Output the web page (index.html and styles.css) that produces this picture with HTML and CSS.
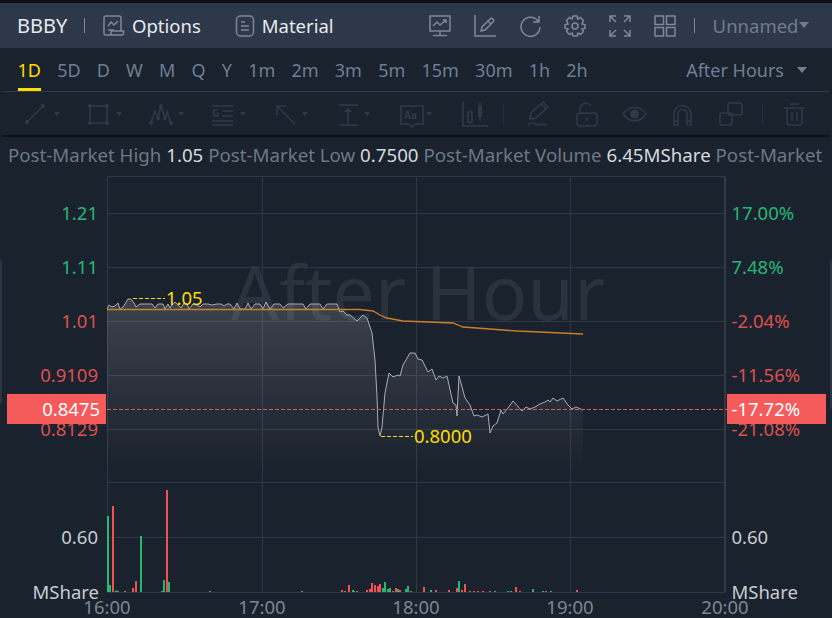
FILE: index.html
```html
<!DOCTYPE html>
<html>
<head>
  <title>BBBY</title>
  <link rel="stylesheet" href="styles.css">
</head>
<body>
  <div class="topbar">
    <span class="symbol">BBBY</span>
    <span class="top-sep"></span>
    <a class="top-link link-options">
      <svg class="top-icon" viewBox="0 0 22 22"><path d="M18 16V3a2 2 0 0 0-2-2H3a2 2 0 0 0-2 2v15a2 2 0 0 0 2 2h15.500a2 2 0 0 0 2-2v-2H8v2a2 2 0 0 1-2 2"/><path d="M5 11l3-4 3 3 4-4M5 15h6"/></svg>
      Options
    </a>
    <a class="top-link link-material">
      <svg class="top-icon" viewBox="0 0 20 22"><rect x="1.500" y="1" width="17" height="20" rx="4"/><path d="M6 7h4M6 11h8M6 15h8"/></svg>
      Material
    </a>
    <div class="top-actions">
      <svg class="top-icon" viewBox="0 0 22 22"><rect x="1" y="1" width="20" height="15"/><path d="M4 11l4-4 3 3 6-5M14 5h3v3M11 16v4M4 20.500h14"/></svg>
      <svg class="top-icon" viewBox="0 0 22 22"><path d="M1 0v21h21M7 16l1-4 8-8a1.500 1.500 0 0 1 3 3l-8 8zM14 6l3 3"/></svg>
      <svg class="top-icon" viewBox="0 0 22 22"><path d="M19 6a9.500 9.500 0 1 0 2 6M20 1v6h-6"/></svg>
      <svg class="top-icon" viewBox="0 0 22 22"><path d="M9 1h4l.7 3 2.600-1.500 3 3L18 9l3 .8v3.400L18 14l1.500 2.500-3 3L14 18l-1 3H9l-.8-3-2.700 1.500-3-3L4 14l-3-.8V9.800L4 9 2.500 5.500l3-3L8.200 4z"/><circle cx="11" cy="11" r="3"/></svg>
      <svg class="top-icon" viewBox="0 0 22 22"><path d="M1 7V1h6M1 1l6 6M15 1h6v6M21 1l-6 6M1 15v6h6M1 21l6-6M15 21h6v-6M21 21l-6-6"/></svg>
      <svg class="top-icon" viewBox="0 0 22 22"><rect x="1" y="1" width="8.500" height="8.500"/><rect x="12.500" y="1" width="8.500" height="8.500"/><rect x="1" y="12.500" width="8.500" height="8.500"/><rect x="12.500" y="12.500" width="8.500" height="8.500"/></svg>
    </div>
    <span class="top-sep sep-right"></span>
    <span class="layout-name">Unnamed<i class="caret caret-layout"></i></span>
  </div>

  <div class="periods">
    <span class="period active">1D</span>
    <span class="period">5D</span>
    <span class="period">D</span>
    <span class="period">W</span>
    <span class="period">M</span>
    <span class="period">Q</span>
    <span class="period">Y</span>
    <span class="period">1m</span>
    <span class="period">2m</span>
    <span class="period">3m</span>
    <span class="period">5m</span>
    <span class="period">15m</span>
    <span class="period">30m</span>
    <span class="period">1h</span>
    <span class="period">2h</span>
    <span class="session">After Hours<i class="caret caret-session"></i></span>
  </div>

  <div class="tools">
    <div class="tool"><svg viewBox="0 0 24 24"><path d="M3 20L19 4"/><circle class="dot" cx="3" cy="20" r="2"/><circle class="dot" cx="19" cy="4" r="2"/></svg><i class="caret"></i></div>
    <div class="tool"><svg viewBox="0 0 24 24"><rect x="4" y="4" width="17" height="17"/><circle class="dot" cx="4" cy="4" r="2"/><circle class="dot" cx="21" cy="4" r="2"/><circle class="dot" cx="4" cy="21" r="2"/><circle class="dot" cx="21" cy="21" r="2"/></svg><i class="caret"></i></div>
    <div class="tool"><svg viewBox="0 0 24 24"><path d="M3 21l4-12 3 7 3-12 4 12 2-6 4 11"/><circle class="dot" cx="3" cy="21" r="2"/><circle class="dot" cx="13" cy="4" r="2"/><circle class="dot" cx="10" cy="16" r="2"/><circle class="dot" cx="17" cy="16" r="2"/><circle class="dot" cx="23" cy="21" r="2"/></svg><i class="caret"></i></div>
    <div class="tool"><svg viewBox="0 0 24 24"><path d="M2 4h21M12 9h11M12 14h11M2 19h21M2 23h21"/><text class="tool-letter" x="2" y="15">G</text></svg><i class="caret"></i></div>
    <div class="tool"><svg viewBox="0 0 24 24"><path d="M5 4l18 18M5 4h9M5 4v9"/></svg><i class="caret"></i></div>
    <div class="tool"><svg viewBox="0 0 24 24"><path d="M5 3h19M5 23h19M14 8v15"/><path class="dot" d="M10 10l4-4 4 4z"/></svg><i class="caret"></i></div>
    <div class="tool"><svg viewBox="0 0 24 24"><path d="M5 4h22v18H19l-3 3-3-3H5z"/><text class="tool-letter" x="8" y="17">Aa</text></svg><i class="caret"></i></div>
    <div class="tool tool-wide"><svg class="svg-wide" viewBox="0 0 24 24"><path d="M5 0v24h25M12 8v2M12 20v2M22 1v3M22 15v4"/><rect x="10" y="10" width="4" height="10"/><rect class="dot" x="20" y="4" width="4" height="11"/></svg><span class="tool-sep"></span></div>
    <div class="tool tool-plain"><svg viewBox="0 0 24 24"><path d="M2 23c5-5 7 0 10 0s5-2 9 0M4 17l1-6L17 0l5 5L10 16zM15 2l5 5"/></svg></div>
    <div class="tool tool-plain"><svg viewBox="0 0 24 24"><rect x="3" y="11" width="20" height="13" rx="3"/><path d="M6 11V7a6 6 0 0 1 11-3M13 15v4"/></svg></div>
    <div class="tool tool-plain"><svg viewBox="0 0 24 24"><path d="M1 12c6-9 17-9 23 0-6 9-17 9-23 0z"/><circle class="dot" cx="12.500" cy="12" r="4.500"/></svg></div>
    <div class="tool tool-plain"><svg viewBox="0 0 24 24"><path d="M4 23V12a8.500 8.500 0 0 1 17 0v11h-4V12a4.500 4.500 0 0 0-9 0v11zM4 19h4M17 19h4"/></svg></div>
    <div class="tool tool-last"><svg viewBox="0 0 24 24"><rect x="10" y="1" width="14" height="12" rx="2"/><rect x="2" y="11" width="12" height="12" rx="2"/></svg><span class="tool-sep"></span></div>
    <div class="tool tool-plain"><svg viewBox="0 0 24 24"><path d="M2 6h21M8 2h9M5 6v14a3 3 0 0 0 3 3h9a3 3 0 0 0 3-3V6M10 10v9M15 10v9"/></svg></div>
  </div>

  <div class="quote">
    <span class="q-label">Post-Market High</span> <span class="q-value">1.05</span>
    <span class="q-label">Post-Market Low</span> <span class="q-value">0.7500</span>
    <span class="q-label">Post-Market Volume</span> <span class="q-value">6.45MShare</span>
    <span class="q-label">Post-Market</span>
  </div>

  <svg class="chart" viewBox="0 175 832 443">
    <defs>
      <linearGradient id="priceFill" gradientUnits="userSpaceOnUse" x1="0" y1="305" x2="0" y2="470">
        <stop offset="0" stop-color="#fff" stop-opacity="0.14"/>
        <stop offset="1" stop-color="#fff" stop-opacity="0"/>
      </linearGradient>
    </defs>

    <text class="watermark" x="418" y="320">After Hour</text>

    <path class="grid" d="M107 176.500H725M107 213.500H725M107 267.500H725M107 321.500H725M107 375.500H725M107 429.500H725M107 482.500H725M107 537.500H725M107 592.500H725"/>
    <path class="grid" d="M107.500 176V592M262.500 176V592M416.500 176V592M570.500 176V592"/>
    <path class="axis" d="M725 176V592"/>

    <path class="price-fill" d="M107 309L109 305 112 307 115 306 118 303 120 309 123 307 125 304 128 299 131 299 134 303 136 307 140 304 146 304 152 304 155 308 158 304 163 304 165 309 168 304 170 308 172 305 175 302 178 305 181 308 184 303 187 304 189 309 193 304 197 305 200 307 203 304 208 304 212 305 217 304 221 304 224 306 227 304 230 304 234 309 237 303 240 309 245 309 248 303 251 309 255 304 260 304 263 309 266 302 270 309 274 304 280 304 283 308 288 304 297 304 303 304 306 309 310 304 320 304 323 309 327 304 332 304 337 304 340 312 343 311 347 315 350 315 357 321 363 315 367 318 372 333 375 360 377 397 378 427 380 436 382 427 385 393 389 373 393 377 398 375 400 376 403 365 410 353 415 353 418 359 422 360 428 372 432 369 436 380 439 376 443 378 447 376 453 403 456 405 457 416 459 376 465 398 470 405 474 416 477 415 482 417 488 414 490 433 493 426 497 423 501 410 503 414 508 408 513 401 522 411 526 407 530 409 535 407 540 404 545 402 548 400 550 402 553 398 557 401 563 398 568 405 572 409 576 407 583 410V480H107Z"/>
    <path class="price-line" d="M107 309L109 305 112 307 115 306 118 303 120 309 123 307 125 304 128 299 131 299 134 303 136 307 140 304 146 304 152 304 155 308 158 304 163 304 165 309 168 304 170 308 172 305 175 302 178 305 181 308 184 303 187 304 189 309 193 304 197 305 200 307 203 304 208 304 212 305 217 304 221 304 224 306 227 304 230 304 234 309 237 303 240 309 245 309 248 303 251 309 255 304 260 304 263 309 266 302 270 309 274 304 280 304 283 308 288 304 297 304 303 304 306 309 310 304 320 304 323 309 327 304 332 304 337 304 340 312 343 311 347 315 350 315 357 321 363 315 367 318 372 333 375 360 377 397 378 427 380 436 382 427 385 393 389 373 393 377 398 375 400 376 403 365 410 353 415 353 418 359 422 360 428 372 432 369 436 380 439 376 443 378 447 376 453 403 456 405 457 416 459 376 465 398 470 405 474 416 477 415 482 417 488 414 490 433 493 426 497 423 501 410 503 414 508 408 513 401 522 411 526 407 530 409 535 407 540 404 545 402 548 400 550 402 553 398 557 401 563 398 568 405 572 409 576 407 583 410"/>
    <path class="avg-line" d="M107 309.500H360L373 311 380 315 387 318 403 321 453 323 463 327 517 331 583 334"/>

    <path class="mark-dash" d="M133 298.500H165M381 436.500H413"/>
    <text class="mark" x="166" y="304.500">1.05</text>
    <text class="mark" x="414" y="443">0.8000</text>

    <path class="vol-up" d="M108 592V516M110 592V585M116 592V590.500M118 592V591M141 592V536M162 592V591M164 592V580M169 592V582M210 592V591M302 592V591M353 592V590M354 592V591M383 592V588M385 592V582M388 592V589M390 592V588M398 592V589M406 592V589M408 592V586M431 592V590M459 592V581M490 592V591M495 592V591M508 592V591M511 592V591M533 592V589M543 592V591M551 592V591"/>
    <path class="vol-down" d="M113 592V506M133 592V588M136 592V581M167 592V490M125 592V591M342 592V590M349 592V585M345 592V591M357 592V591M367 592V590M370 592V589M372 592V583M375 592V585M378 592V586M380 592V584M393 592V591M396 592V588M400 592V590M411 592V591M424 592V587M436 592V590M449 592V590M457 592V588M462 592V590M465 592V584M470 592V591M474 592V591M478 592V591M483 592V591M490 592V591M516 592V587M520 592V591M546 592V591M577 592V590"/>

    <g class="axis-left">
      <text class="up" x="98" y="219.500">1.21</text>
      <text class="up" x="98" y="273.500">1.11</text>
      <text class="down" x="98" y="327.500">1.01</text>
      <text class="down" x="98" y="381.500">0.9109</text>
      <text class="down" x="98" y="435.500">0.8129</text>
      <text class="plain" x="98" y="543.500">0.60</text>
      <text class="plain" x="99" y="599">MShare</text>
    </g>
    <g class="axis-right">
      <text class="up" x="731.500" y="219.500">17.00%</text>
      <text class="up" x="731.500" y="273.500">7.48%</text>
      <text class="down" x="731.500" y="327.500">-2.04%</text>
      <text class="down" x="731.500" y="381.500">-11.56%</text>
      <text class="down" x="731.500" y="435.500">-21.08%</text>
      <text class="plain" x="731.500" y="543.500">0.60</text>
      <text class="plain" x="731.500" y="599">MShare</text>
    </g>
    <g class="times">
      <text x="107" y="614">16:00</text>
      <text x="262" y="614">17:00</text>
      <text x="416" y="614">18:00</text>
      <text x="570" y="614">19:00</text>
      <text x="725" y="614">20:00</text>
    </g>

    <path class="last-line" d="M107 409.500H727"/>
    <rect class="tag" x="7" y="394" width="99" height="30"/>
    <rect class="tag" x="727" y="394" width="99" height="30"/>
    <text class="tag-text tag-left" x="100" y="415.500">0.8475</text>
    <text class="tag-text" x="731.500" y="415.500">-17.72%</text>

    <rect class="edge" x="0" y="260" width="2" height="143"/>
    <rect class="edge" x="830" y="260" width="2" height="149"/>
  </svg>
</body>
</html>
```
FILE: styles.css
```css
* {
  box-sizing: border-box;
}

html, body {
  margin: 0;
  height: 100%;
}

body {
  width: 832px;
  height: 618px;
  overflow: hidden;
  background: #1a222d;
  font-family: "Noto Sans", "Open Sans", sans-serif;
  display: flex;
  flex-direction: column;
  border-top: 3px solid #0e1015;
}

/* top bar */
.topbar {
  height: 45px;
  flex: none;
  display: flex;
  align-items: center;
  padding-left: 17px;
  background: #2d394a;
  color: #e6eaef;
  font-size: 18.5px;
}

.symbol {
  font-size: 20px;
  width: 67px;
}

.top-sep {
  width: 1px;
  height: 15px;
  background: #7b8696;
}

.top-link {
  display: flex;
  align-items: center;
  gap: 7px;
}

.link-options {
  margin-left: 18px;
}

.link-material {
  margin-left: 34px;
}

.top-icon {
  width: 22px;
  height: 22px;
  fill: none;
  stroke: #7d8999;
  stroke-width: 1.5;
  overflow: visible;
}

.link-material .top-icon {
  width: 20px;
}

.top-actions {
  margin-left: 95px;
  display: flex;
  gap: 23px;
}

.sep-right {
  margin-left: 18px;
}

.layout-name {
  margin-left: 18px;
  color: #6f7c8e;
  display: flex;
  align-items: center;
}

.caret {
  display: inline-block;
  width: 0;
  height: 0;
  border-left: 5px solid transparent;
  border-right: 5px solid transparent;
  border-top: 6px solid #6f7c8e;
}

.caret-layout {
  margin-top: -2px;
}

/* period row */
.periods {
  height: 44px;
  flex: none;
  margin: 0 3px 0 2px;
  padding-left: 15.5px;
  display: flex;
  align-items: flex-start;
  gap: 16.2px;
  border-bottom: 1px solid #323c49;
  color: #6d7f96;
  font-size: 18px;
}

.period {
  height: 43px;
  line-height: 44px;
  border-bottom: 3px solid transparent;
}

.period.active {
  color: #ffdd00;
  border-bottom-color: #ffdd00;
}

.session {
  margin-left: auto;
  margin-right: 22px;
  height: 43px;
  display: flex;
  align-items: center;
}

.caret-session {
  margin-left: 13px;
  border-top-color: #6d7f96;
}

/* drawing tools */
.tools {
  height: 45px;
  flex: none;
  margin: 0 3px 0 2px;
  padding-left: 22px;
  display: flex;
  align-items: center;
  border-bottom: 2px solid #0e1015;
}

.tool {
  width: 62px;
  flex: none;
  display: flex;
  align-items: center;
  gap: 6px;
}

.tool svg {
  width: 24px;
  height: 24px;
  flex: none;
  fill: none;
  stroke: #303a47;
  stroke-width: 1.5;
  overflow: visible;
}

.tool .dot {
  fill: #303a47;
  stroke: none;
}

.tool .caret {
  border-left-width: 3px;
  border-right-width: 3px;
  border-top: 4px solid #303a47;
}

.tool-letter {
  fill: #303a47;
  stroke: none;
  font-size: 10px;
  font-weight: 700;
}

.tool-wide {
  width: 68px;
  gap: 21px;
}

.tool-plain {
  width: 48px;
}

.tool-last {
  width: 64px;
  gap: 20px;
}

.tool-sep {
  width: 1px;
  height: 22px;
  background: #232c38;
}

/* quote line */
.quote {
  height: 38px;
  flex: none;
  padding: 0 0 4px 8px;
  display: flex;
  align-items: center;
  gap: 4.9px;
  white-space: nowrap;
  overflow: hidden;
  font-size: 18.7px;
}

.q-label {
  color: #6c7887;
}

.q-value {
  color: #d6dade;
}

/* chart */
.chart {
  display: block;
  width: 832px;
  height: 443px;
  flex: none;
  font-size: 18.5px;
}

.watermark {
  fill: #2a323e;
  font-size: 75.5px;
  text-anchor: middle;
}

.grid {
  stroke: #2e3945;
  fill: none;
}

.axis {
  stroke: #2f3a49;
  stroke-width: 2;
  fill: none;
}

.price-fill {
  fill: url(#priceFill);
}

.price-line {
  fill: none;
  stroke: #a9adb2;
  stroke-width: 1;
}

.avg-line {
  fill: none;
  stroke: #c97f2c;
  stroke-width: 1.3;
}

.mark-dash {
  fill: none;
  stroke: #ffdd00;
  stroke-dasharray: 4 2;
}

.mark {
  fill: #ffdd00;
}

.vol-up,
.vol-down {
  fill: none;
  stroke-width: 2;
}

.vol-up {
  stroke: #25b873;
}

.vol-down {
  stroke: #f15050;
}

.axis-left text {
  text-anchor: end;
}

.up {
  fill: #27b576;
}

.down {
  fill: #dd4f50;
}

.plain {
  fill: #c8ccd1;
}

.times text {
  fill: #7b8694;
  text-anchor: middle;
}

.last-line {
  stroke: #d65a5e;
  stroke-dasharray: 4 2;
  fill: none;
}

.tag {
  fill: #f55b5b;
}

.tag-text {
  fill: #fff;
}

.tag-left {
  text-anchor: end;
}

.edge {
  fill: #2a3442;
}
```
